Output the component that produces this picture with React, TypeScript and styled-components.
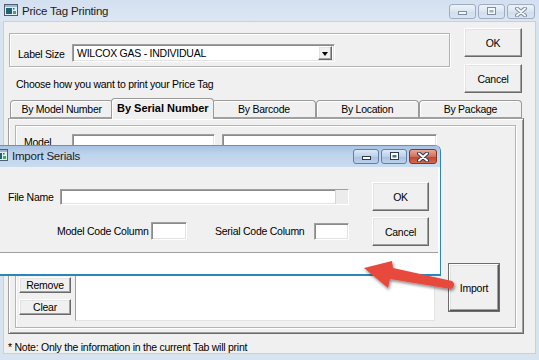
import React from "react";
import styled, { createGlobalStyle, css } from "styled-components";

const GlobalStyle = createGlobalStyle`
  *, *::before, *::after { box-sizing: border-box; }
  html, body { margin: 0; padding: 0; background: #fff; }
  body {
    font-family: "Liberation Sans", Arial, sans-serif;
    font-size: 10.5px;
    letter-spacing: -0.25px;
    color: #000;
  }
  #root { width: 539px; height: 360px; overflow: hidden; }
`;

// classic 3D edges
const raised = css`
  background: #f0f0f0;
  border: 1px solid;
  border-color: #fff #696969 #696969 #fff;
  box-shadow: inset -1px -1px 0 #a0a0a0, inset 1px 1px 0 #e3e3e3;
`;

const sunken = css`
  background: #fff;
  border: 1px solid;
  border-color: #a0a0a0 #fff #fff #a0a0a0;
  box-shadow: inset 1px 1px 0 #8a8a8a, inset -1px -1px 0 #e3e3e3;
`;

const etched = css`
  border: 1px solid #b4b4b4;
  box-shadow: inset 1px 1px 0 #fff, 1px 1px 0 #fff;
`;

const Window = styled.div`
  position: relative;
  width: 539px;
  height: 360px;
  display: flex;
  flex-direction: column;
  background: #d8e3f0;
  overflow: hidden;
`;

const TitleBar = styled.div<{ $active?: boolean }>`
  height: ${p => (p.$active ? 21 : 22)}px;
  flex-shrink: 0;
  display: flex;
  align-items: flex-start;
  padding: ${p => (p.$active ? "3px 3px 0 4px" : "4px 4px 0 4px")};
  background: ${p =>
    p.$active
      ? "linear-gradient(#a8c2e2, #bfd3ec 40%, #c9dbef)"
      : "linear-gradient(#d3e0ef, #dde7f3)"};
`;

const TitleText = styled.span`
  font-size: 11.5px;
  letter-spacing: -0.2px;
  line-height: 14px;
  margin-left: 4px;
  color: #1c1c1c;
`;

const CaptionButtons = styled.div`
  margin-left: auto;
  display: flex;
  gap: 2px;
`;

const CaptionButton = styled.div<{ $tone: "inactive" | "active" | "close"; $w: number }>`
  width: ${p => p.$w}px;
  height: 15px;
  border-radius: 3px;
  display: flex;
  align-items: center;
  justify-content: center;
  ${p =>
    p.$tone === "inactive"
      ? css`
          border: 1px solid #9eadc2;
          background: linear-gradient(#edf2f8, #dbe5f1 50%, #d2dded 51%, #dae4f0);
        `
      : p.$tone === "active"
      ? css`
          border: 1px solid #5f7ea8;
          background: linear-gradient(#dce8f5, #bcd0e8 50%, #a7c0e0 51%, #bdd2ea);
        `
      : css`
          border: 1px solid #8b3223;
          background: linear-gradient(#eaa796, #d46f5a 50%, #c2432d 51%, #d2694e);
        `}
`;

const Glyph: React.FC<{ kind: "min" | "max" | "close"; dim?: boolean }> = ({ kind, dim }) => {
  const dark = dim ? "#7c8ca3" : "#2a3a52";
  const light = dim ? "#f5f8fc" : "#fff";
  if (kind === "min")
    return (
      <svg width="11" height="9" viewBox="0 0 11 9">
        <rect x="1.5" y="4.5" width="8" height="3" fill={light} stroke={dark} />
      </svg>
    );
  if (kind === "max")
    return (
      <svg width="11" height="9" viewBox="0 0 11 9">
        <rect x="1.5" y="0.5" width="8" height="7" fill={light} stroke={dark} />
        <rect x="3.5" y="3" width="4" height="2.5" fill={dim ? "#9fb0c6" : "#4b6a94"} />
      </svg>
    );
  return (
    <svg width="12" height="10" viewBox="0 0 12 10">
      <path d="M2 1.5 L10 8.5 M10 1.5 L2 8.5" stroke={dark} strokeWidth="4" strokeLinecap="round" />
      <path d="M2 1.5 L10 8.5 M10 1.5 L2 8.5" stroke={light} strokeWidth="2" strokeLinecap="round" />
    </svg>
  );
};

const AppIcon: React.FC = () => (
  <svg width="14" height="12" viewBox="0 0 14 12">
    <rect x="0.5" y="0.5" width="13" height="11" fill="#e4edf6" stroke="#4e5e70" />
    <rect x="1" y="1" width="12" height="2" fill="#9fb6cf" />
    <rect x="2" y="4" width="6" height="6" fill="#1d6470" />
    <rect x="9" y="7" width="3" height="3" fill="#3fae49" />
    <rect x="9" y="4" width="1.5" height="1.5" fill="#3f5c7a" />
  </svg>
);

const Client = styled.div`
  flex: 1;
  margin: 0 4px 7px 4px;
  background: #f0f0f0;
  box-shadow: 0 0 0 1px #c2d1e3;
  padding: 6px 0 0 4px;
  display: flex;
  flex-direction: column;
`;

const TopArea = styled.div`
  display: flex;
  align-items: flex-start;
`;

const LeftCol = styled.div`
  margin-left: 1px;
  width: 441px;
  display: flex;
  flex-direction: column;
`;

const GroupBox = styled.div`
  ${etched};
  margin-top: 5px;
  height: 34px;
  display: flex;
  align-items: flex-end;
  padding: 0 0 4px 8px;
`;

const FieldLabel = styled.span<{ $w: number; $pad?: number; $gap?: number }>`
  width: ${p => p.$w}px;
  padding-left: ${p => p.$pad ?? 0}px;
  margin-left: ${p => p.$gap ?? 0}px;
  flex-shrink: 0;
  line-height: 16px;
  white-space: nowrap;
`;

const Combo = styled.div`
  ${sunken};
  width: 263px;
  height: 18px;
  display: flex;
  align-items: center;
  padding: 2px 2px 2px 4px;
`;

const ComboText = styled.span`
  flex: 1;
  line-height: 14px;
`;

const DropButton = styled.div`
  ${raised};
  width: 14px;
  height: 14px;
  display: flex;
  align-items: center;
  justify-content: center;
`;

const DropArrow = styled.div`
  width: 0;
  height: 0;
  border-left: 3.5px solid transparent;
  border-right: 3.5px solid transparent;
  border-top: 4px solid #000;
  margin-top: 1px;
`;

const Prompt = styled.div`
  margin-top: 11px;
  padding-left: 7px;
  line-height: 12px;
`;

const RightCol = styled.div`
  margin-left: 14px;
  display: flex;
  flex-direction: column;
  gap: 7px;
`;

const PushButton = styled.div<{ $w: number; $h: number }>`
  ${raised};
  width: ${p => p.$w}px;
  height: ${p => p.$h}px;
  display: flex;
  align-items: center;
  justify-content: center;
  flex-shrink: 0;
`;

const TabStrip = styled.div`
  margin-top: 5px;
  width: 516px;
  height: 20px;
  padding: 0 2px 0 2px;
  display: flex;
  align-items: flex-end;
  position: relative;
  z-index: 1;
`;

const Tab = styled.div<{ $selected?: boolean }>`
  flex: 1;
  height: ${p => (p.$selected ? 21 : 18)}px;
  margin: ${p => (p.$selected ? "0 -2px -1px" : "0")};
  background: #f0f0f0;
  border: 1px solid #9a9a9a;
  border-bottom: ${p => (p.$selected ? "none" : "1px solid #a0a0a0")};
  border-radius: 4px 4px 0 0;
  box-shadow: inset 1px 1px 0 #fff;
  display: flex;
  align-items: center;
  justify-content: center;
  padding-bottom: ${p => (p.$selected ? 2 : 0)}px;
  font-weight: ${p => (p.$selected ? 700 : 400)};
  font-size: ${p => (p.$selected ? 11 : 10.5)}px;
  letter-spacing: ${p => (p.$selected ? 0 : -0.25)}px;
  white-space: nowrap;
  position: relative;
  z-index: ${p => (p.$selected ? 2 : 0)};
`;

const TabPanel = styled.div`
  width: 516px;
  height: 216px;
  background: #f0f0f0;
  border: 1px solid;
  border-color: #a0a0a0 #696969 #696969 #a0a0a0;
  box-shadow: inset 1px 1px 0 #fff, inset -1px -1px 0 #a0a0a0;
  padding: 6px 7px 5px 6px;
  display: flex;
`;

const InnerGroup = styled.div`
  ${etched};
  flex: 1;
  display: flex;
  flex-direction: column;
  padding: 8px 0 6px 3px;
`;

const ModelRow = styled.div`
  display: flex;
  align-items: center;
`;

const TextField = styled.div<{ $w: number; $h: number; $gap?: number }>`
  ${sunken};
  width: ${p => p.$w}px;
  height: ${p => p.$h}px;
  margin-left: ${p => p.$gap ?? 0}px;
  flex-shrink: 0;
`;

const BottomRow = styled.div`
  margin-top: auto;
  display: flex;
  align-items: flex-end;
`;

const SideButtons = styled.div`
  width: 52px;
  display: flex;
  flex-direction: column;
  gap: 6px;
  margin-bottom: 6px;
`;

const SmallButton = styled.div`
  ${raised};
  height: 16px;
  display: flex;
  align-items: center;
  justify-content: center;
  line-height: 14px;
`;

const ListBox = styled.div`
  margin-left: 4px;
  width: 360px;
  height: 58px;
  background: #fff;
  border: 1px solid;
  border-color: #a0a0a0 #e3e3e3 #e3e3e3 #a0a0a0;
`;

const ImportButton = styled.div`
  ${raised};
  border-color: #fff #555 #555 #fff;
  outline: 1px solid #6d6d6d;
  margin: 0 0 10px 14px;
  width: 50px;
  height: 47px;
  display: flex;
  align-items: center;
  justify-content: center;
`;

const Note = styled.div`
  margin-top: 7px;
  line-height: 12px;
`;

/* floating dialog */
const Dialog = styled.div`
  position: absolute;
  left: -11px;
  top: 145px;
  width: 452px;
  height: 131px;
  display: flex;
  flex-direction: column;
  background: #fff;
  border: 1px solid #2a88b8;
  border-top-color: #6f8fb6;
  border-bottom-width: 2px;
  border-top-right-radius: 6px;
  overflow: hidden;
  z-index: 5;
`;

const DialogBody = styled.div`
  height: 86px;
  margin-right: 2px;
  background: #f0f0f0;
  border-bottom: 1px solid #a0a0a0;
  display: flex;
  padding: 15px 9px 0 18px;
`;

const FormArea = styled.div`
  flex: 1;
  display: flex;
  flex-direction: column;
`;

const FileRow = styled.div`
  margin-top: 7px;
  display: flex;
  align-items: center;
`;

const FileInput = styled.div`
  ${sunken};
  width: 289px;
  height: 16px;
  position: relative;
  &::after {
    content: "";
    position: absolute;
    right: 0;
    top: 0;
    width: 13px;
    height: 100%;
    background: #ececec;
    border-left: 1px solid #d6d6d6;
  }
`;

const CodeRow = styled.div`
  margin-top: 17px;
  padding-left: 49px;
  display: flex;
  align-items: center;
`;

const DialogButtons = styled.div`
  width: 57px;
  display: flex;
  flex-direction: column;
  gap: 6px;
`;

const ArrowOverlay = styled.svg`
  position: absolute;
  left: 0;
  top: 0;
  z-index: 10;
  pointer-events: none;
`;

const tabs = ["By Model Number", "By Serial Number", "By Barcode", "By Location", "By Package"];

export default function App() {
  return (
    <>
      <GlobalStyle />
      <Window>
        <TitleBar>
          <AppIcon />
          <TitleText>Price Tag Printing</TitleText>
          <CaptionButtons>
            <CaptionButton $tone="inactive" $w={27}><Glyph kind="min" dim /></CaptionButton>
            <CaptionButton $tone="inactive" $w={27}><Glyph kind="max" dim /></CaptionButton>
            <CaptionButton $tone="inactive" $w={28}><Glyph kind="close" dim /></CaptionButton>
          </CaptionButtons>
        </TitleBar>

        <Client>
          <TopArea>
            <LeftCol>
              <GroupBox>
                <FieldLabel $w={54}>Label Size</FieldLabel>
                <Combo>
                  <ComboText>WILCOX GAS - INDIVIDUAL</ComboText>
                  <DropButton><DropArrow /></DropButton>
                </Combo>
              </GroupBox>
              <Prompt>Choose how you want to print your Price Tag</Prompt>
            </LeftCol>
            <RightCol>
              <PushButton $w={58} $h={29}>OK</PushButton>
              <PushButton $w={58} $h={29}>Cancel</PushButton>
            </RightCol>
          </TopArea>

          <TabStrip>
            {tabs.map(t => (
              <Tab key={t} $selected={t === "By Serial Number"}>{t}</Tab>
            ))}
          </TabStrip>
          <TabPanel>
            <InnerGroup>
              <ModelRow>
                <FieldLabel $w={53} $pad={5}>Model</FieldLabel>
                <TextField $w={143} $h={16} />
                <TextField $w={215} $h={16} $gap={7} />
              </ModelRow>
              <BottomRow>
                <SideButtons>
                  <SmallButton>Add</SmallButton>
                  <SmallButton>Remove</SmallButton>
                  <SmallButton>Clear</SmallButton>
                </SideButtons>
                <ListBox />
                <ImportButton>Import</ImportButton>
              </BottomRow>
            </InnerGroup>
          </TabPanel>
          <Note>* Note: Only the information in the current Tab will print</Note>
        </Client>

        <Dialog>
          <TitleBar $active>
            <AppIcon />
            <TitleText>Import Serials</TitleText>
            <CaptionButtons>
              <CaptionButton $tone="active" $w={26}><Glyph kind="min" /></CaptionButton>
              <CaptionButton $tone="active" $w={26}><Glyph kind="max" /></CaptionButton>
              <CaptionButton $tone="close" $w={28}><Glyph kind="close" /></CaptionButton>
            </CaptionButtons>
          </TitleBar>
          <DialogBody>
            <FormArea>
              <FileRow>
                <FieldLabel $w={52}>File Name</FieldLabel>
                <FileInput />
              </FileRow>
              <CodeRow>
                <FieldLabel $w={94}>Model Code Column</FieldLabel>
                <TextField $w={36} $h={18} />
                <FieldLabel $w={99} $gap={28}>Serial Code Column</FieldLabel>
                <TextField $w={35} $h={17} />
              </CodeRow>
            </FormArea>
            <DialogButtons>
              <PushButton $w={57} $h={29}>OK</PushButton>
              <PushButton $w={57} $h={29}>Cancel</PushButton>
            </DialogButtons>
          </DialogBody>
        </Dialog>

        <ArrowOverlay width="539" height="360" viewBox="0 0 539 360">
          <defs>
            <filter id="arrowShadow" x="-20%" y="-40%" width="140%" height="180%">
              <feDropShadow dx="1" dy="2" stdDeviation="1.5" floodColor="#000" floodOpacity="0.45" />
            </filter>
          </defs>
          <path
            d="M364 268 L392 261 L393 268 L452 281 Q457 285 451 289 L390 279 L388 288 Z"
            fill="#e8483c"
            filter="url(#arrowShadow)"
          />
        </ArrowOverlay>
      </Window>
    </>
  );
}
